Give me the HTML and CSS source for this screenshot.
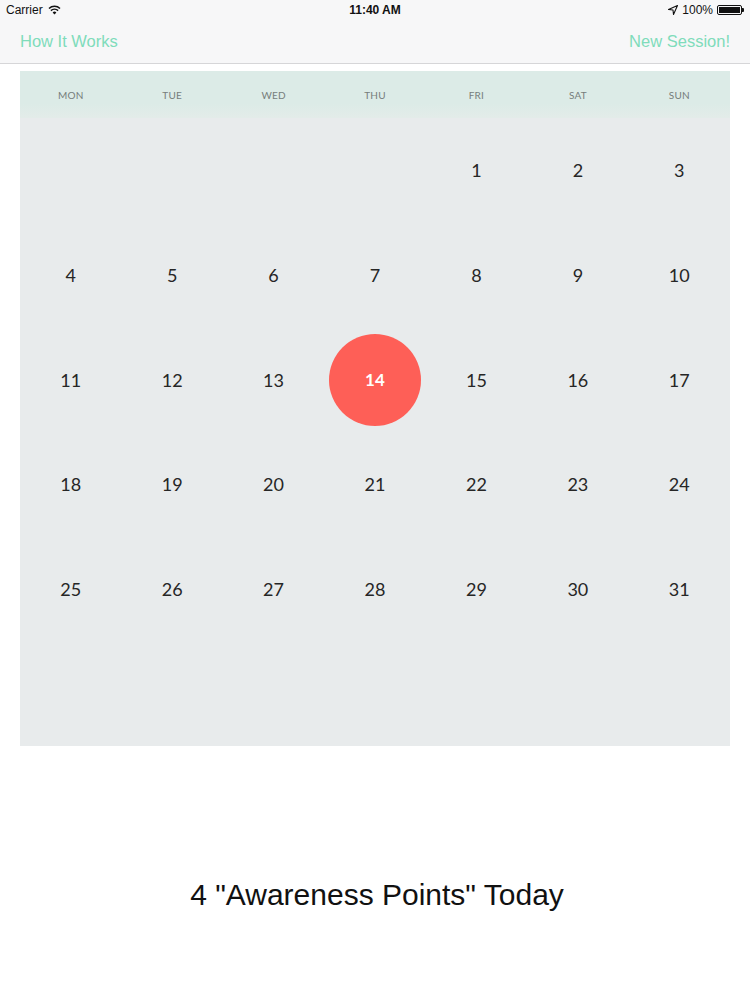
FILE: index.html
```html
<!DOCTYPE html>
<html lang="en">

<head>
    <meta charset="UTF-8">
    <meta name="viewport" content="width=device-width, initial-scale=1.0">
    <title>Calendar</title>
    <link rel="stylesheet" href="styles.css">
</head>

<body>
    <div class="status_bar">
        <div class="status_left">
            Carrier
            <svg class="wifi" width="13" height="10" viewBox="0 0 13 10">
                <path d="M6.5 9.5 L4.6 7.4 A2.8 2.8 0 0 1 8.4 7.4 Z" fill="#111" />
                <path d="M2.9 5.6 A5.2 5.2 0 0 1 10.1 5.6" stroke="#111" stroke-width="1.5" fill="none" />
                <path d="M1 3.5 A7.8 7.8 0 0 1 12 3.5" stroke="#111" stroke-width="1.5" fill="none" />
            </svg>
        </div>
        <div class="status_time">11:40 AM</div>
        <div class="status_right">
            <svg width="10" height="10" viewBox="0 0 10 10">
                <path d="M9.5 0.5 L0.5 4.5 L5 5 L5.5 9.5 Z" fill="none" stroke="#111" stroke-width="1.1" stroke-linejoin="round" />
            </svg>
            100%
            <div class="battery"><div class="battery_fill"></div></div>
        </div>
    </div>

    <div class="nav_bar">
        <span class="nav_link">How It Works</span>
        <span class="nav_link">New Session!</span>
    </div>

    <div class="calendar">
        <div class="week_header">
            <span>MON</span><span>TUE</span><span>WED</span><span>THU</span>
            <span>FRI</span><span>SAT</span><span>SUN</span>
        </div>
        <div class="days" id="days"></div>
    </div>

    <div class="points">4 "Awareness Points" Today</div>

    <script>
        // month starts on friday, 31 days, today is the 14th
        let days = document.getElementById("days")
        let offset = 4
        let today = 14

        for (let i = 0; i < 42; i++) {
            let cell = document.createElement("div")
            cell.className = "day"
            let num = i - offset + 1
            if (num >= 1 && num <= 31) {
                let label = document.createElement("span")
                label.textContent = num
                if (num === today) label.className = "today"
                cell.appendChild(label)
            }
            days.appendChild(cell)
        }
    </script>
</body>

</html>
```

FILE: styles.css
```css
* {
    margin: 0;
    padding: 0;
    box-sizing: border-box;
}

body {
    width: 750px;
    height: 1000px;
    background: #ffffff;
    font-family: "Lato", "Noto Sans", sans-serif;
}

.status_bar {
    height: 20px;
    background: #f7f7f8;
    display: flex;
    justify-content: space-between;
    align-items: center;
    padding: 0 6px 0 6px;
    font-family: "Liberation Sans", sans-serif;
    font-size: 12px;
    color: #111;
    position: relative;
}

.status_left,
.status_right {
    display: flex;
    align-items: center;
    gap: 5px;
}

.status_right {
    gap: 4px;
}

.status_time {
    position: absolute;
    left: 0;
    right: 0;
    text-align: center;
    font-weight: bold;
}

.battery {
    width: 25px;
    height: 10px;
    border: 1px solid #111;
    border-radius: 2px;
    padding: 1px;
    position: relative;
    margin-right: 2px;
}

.battery::after {
    content: "";
    position: absolute;
    right: -3px;
    top: 2px;
    width: 2px;
    height: 4px;
    background: #111;
    border-radius: 0 1px 1px 0;
}

.battery_fill {
    width: 100%;
    height: 100%;
    background: #111;
}

.nav_bar {
    height: 44px;
    background: #f7f7f8;
    border-bottom: 1px solid #d6d6d8;
    display: flex;
    justify-content: space-between;
    align-items: center;
    padding: 0 20px 0 20px;
}

.nav_link {
    font-family: "Liberation Sans", sans-serif;
    font-size: 16.5px;
    color: #7fdcbb;
}

.calendar {
    margin: 7px 20px 0 20px;
    height: 675px;
    background: #e8ebec;
    display: flex;
    flex-direction: column;
}

.week_header {
    height: 47px;
    background: linear-gradient(to bottom, #dcebe7 70%, #e3ece9);
    display: grid;
    grid-template-columns: repeat(7, 1fr);
    align-items: center;
    justify-items: center;
    font-size: 10px;
    color: #767d7b;
    letter-spacing: 0.2px;
}

.days {
    flex: 1;
    display: grid;
    grid-template-columns: repeat(7, 1fr);
    grid-template-rows: repeat(6, 1fr);
}

.day {
    display: flex;
    align-items: center;
    justify-content: center;
    font-size: 18px;
    color: #262626;
}

.today {
    width: 92px;
    height: 92px;
    border-radius: 50%;
    background: #fe5f57;
    color: #fff;
    font-weight: bold;
    font-size: 17px;
    display: flex;
    align-items: center;
    justify-content: center;
}

.points {
    margin-top: 132px;
    text-align: center;
    font-family: "Liberation Sans", sans-serif;
    font-size: 30px;
    color: #111;
    padding-left: 4px;
}
```
